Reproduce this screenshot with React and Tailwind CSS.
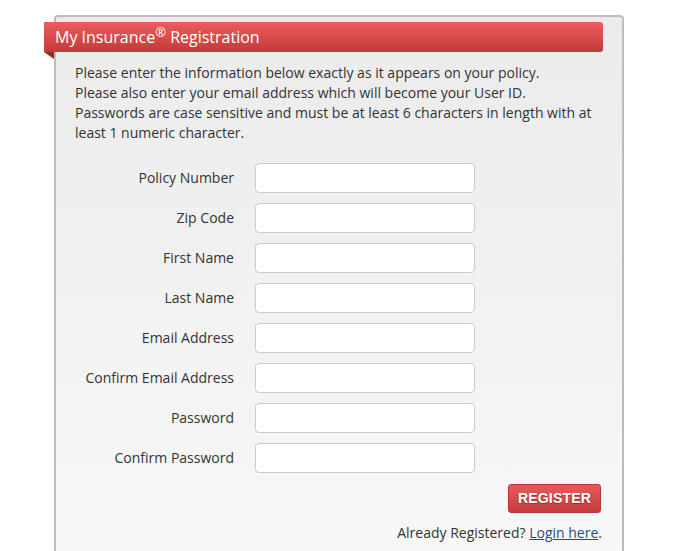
import React from "react";

const fields = [
  "Policy Number",
  "Zip Code",
  "First Name",
  "Last Name",
  "Email Address",
  "Confirm Email Address",
  "Password",
  "Confirm Password",
];

export default function App() {
  return (
    <div
      className="w-[681px] h-[551px] overflow-hidden bg-white pl-[54px] pt-[15px] text-[#333]"
      style={{ fontFamily: '"Open Sans", "Liberation Sans", sans-serif' }}
    >
      <div className="w-[570px] h-[560px] border-2 border-b-0 border-[#bcbcbc] rounded-t-[4px] bg-gradient-to-b from-[#ebebeb] to-[#f8f8f8]">
        <div className="relative mt-[5px] ml-[-12px] w-[559px]">
          <div className="h-[30px] rounded-r-[3px] bg-gradient-to-b from-[#ec5d5d] to-[#c13a3a] pl-[11px] flex items-center text-white text-[16px] leading-none">
            <span>
              My Insurance
              <span className="inline-block text-[13px] leading-none align-top relative top-[-3px]">®</span>{" "}
              Registration
            </span>
          </div>
          <div className="w-0 h-0 border-t-[7px] border-t-[#8e2b2b] border-l-[10px] border-l-transparent" />
        </div>
        <div className="pl-[19px] pr-[20px] mt-[4px] text-[14px] leading-[20px]">
          <p>Please enter the information below exactly as it appears on your policy.</p>
          <p>Please also enter your email address which will become your User ID.</p>
          <p>
            Passwords are case sensitive and must be at least 6 characters in length with at
            least 1 numeric character.
          </p>
        </div>
        <div className="mt-[20px] flex flex-col gap-[10px]">
          {fields.map((f) => (
            <div key={f} className="flex items-center h-[30px]">
              <label className="w-[178px] text-right text-[14px] leading-[20px]">{f}</label>
              <input
                type={f.includes("Password") ? "password" : "text"}
                className="ml-[21px] w-[220px] h-[30px] bg-white border border-[#cccccc] rounded-[4px] outline-none"
              />
            </div>
          ))}
        </div>
        <div className="flex justify-end pr-[21px] mt-[11px]">
          <button
            className="w-[93px] h-[29px] rounded-[3px] border border-[#b83535] bg-gradient-to-b from-[#e85a5a] to-[#c33c3c] text-white font-bold text-[14px] tracking-[0.2px] [text-shadow:0_1px_1px_rgba(0,0,0,0.35)]"
            style={{ fontFamily: '"Liberation Sans", Arial, sans-serif' }}
          >
            REGISTER
          </button>
        </div>
        <div className="flex justify-end pr-[20px] mt-[10px] text-[14px] leading-[20px]">
          <span>
            Already Registered?{" "}
            <a href="#" className="text-[#1f4f8b] underline">
              Login here
            </a>
            .
          </span>
        </div>
      </div>
    </div>
  );
}
